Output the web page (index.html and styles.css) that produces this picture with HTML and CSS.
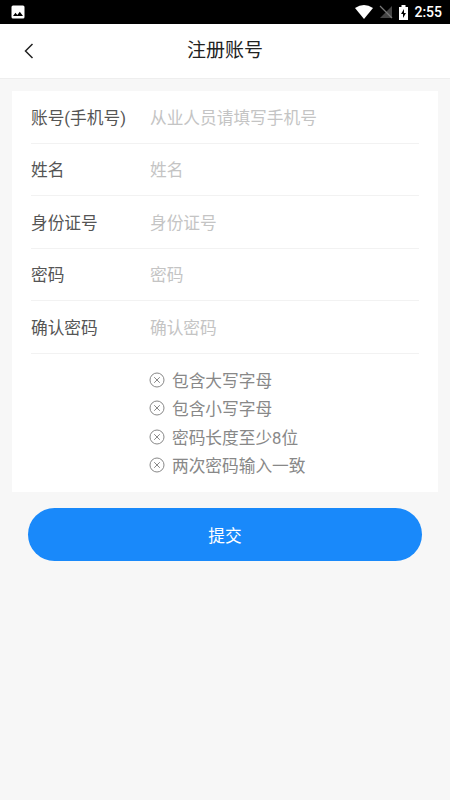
FILE: index.html
```html
<!DOCTYPE html>
<html lang="zh-CN">
<head>
<meta charset="utf-8">
<title>注册账号</title>
<link rel="stylesheet" href="styles.css">
</head>
<body>
<div class="status">
  <svg class="photo" width="14" height="14" viewBox="0 0 14 14"><rect x="0.5" y="0.5" width="13" height="13" rx="1.5" fill="#fff"/><path d="M2 11l2.5-3.2 1.8 2.1 2.5-3.2L12 11z" fill="#000"/></svg>
  <div class="tray">
    <svg width="18" height="14" viewBox="0 0 18 14"><path d="M0 3Q9-3 18 3L9 14z" fill="#fff"/></svg>
    <svg width="14" height="14" viewBox="0 0 14 14"><path d="M13 1v12H1z" fill="#444"/><path d="M1 1l12 12" stroke="#777" stroke-width="1.3"/></svg>
    <svg width="9" height="15" viewBox="0 0 9 15"><path d="M0 2h2.5V0h4v2H9v13H0z" fill="#fff"/><path d="M5 4L2 9h2v4l3-5H5z" fill="#000"/></svg>
    <span class="clock">2:55</span>
  </div>
</div>
<header class="nav">
  <svg class="back" width="10" height="16" viewBox="0 0 10 16"><path d="M8.5 1L1.5 8l7 7" fill="none" stroke="#222" stroke-width="1.5"/></svg>
  <h1>注册账号</h1>
</header>
<main>
  <form class="card">
    <div class="row"><span class="label">账号(手机号)</span><span class="hint">从业人员请填写手机号</span></div>
    <div class="row"><span class="label">姓名</span><span class="hint">姓名</span></div>
    <div class="row"><span class="label">身份证号</span><span class="hint">身份证号</span></div>
    <div class="row"><span class="label">密码</span><span class="hint">密码</span></div>
    <div class="row"><span class="label">确认密码</span><span class="hint">确认密码</span></div>
    <ul class="rules">
      <li><svg width="16" height="16" viewBox="0 0 16 16"><circle cx="8" cy="8" r="7"/><path d="M5.2 5.2l5.6 5.6M10.8 5.2l-5.6 5.6"/></svg>包含大写字母</li>
      <li><svg width="16" height="16" viewBox="0 0 16 16"><circle cx="8" cy="8" r="7"/><path d="M5.2 5.2l5.6 5.6M10.8 5.2l-5.6 5.6"/></svg>包含小写字母</li>
      <li><svg width="16" height="16" viewBox="0 0 16 16"><circle cx="8" cy="8" r="7"/><path d="M5.2 5.2l5.6 5.6M10.8 5.2l-5.6 5.6"/></svg>密码长度至少8位</li>
      <li><svg width="16" height="16" viewBox="0 0 16 16"><circle cx="8" cy="8" r="7"/><path d="M5.2 5.2l5.6 5.6M10.8 5.2l-5.6 5.6"/></svg>两次密码输入一致</li>
    </ul>
  </form>
  <button class="submit">提交</button>
</main>
</body>
</html>
```

FILE: styles.css
```css
* { box-sizing: border-box; }
body { margin: 0; min-height: 800px; background: #f7f7f7; font-family: Roboto, "Noto Sans CJK SC", sans-serif; }
.status { height: 24px; background: #000; display: flex; align-items: center; justify-content: space-between; padding: 0 8px 0 11px; }
.tray { display: flex; align-items: center; gap: 6px; }
.clock { color: #fff; font-size: 14px; font-weight: 500; line-height: 24px; }
.nav { height: 55px; background: #fff; border-bottom: 1px solid #eee; display: grid; grid-template-columns: 50px 1fr 50px; align-items: center; }
.back { margin-left: 24px; }
h1 { margin: 0; text-align: center; font-size: 19px; font-weight: 400; line-height: 28px; color: #222; }
main { padding: 12px; }
.card { background: #fff; height: 401px; padding: 0 19px; }
.row { height: 52.5px; display: flex; align-items: center; border-bottom: 1px solid #f2f2f2; font-size: 16.7px; }
.label { width: 119px; color: #555; white-space: nowrap; }
.hint { color: #c4c4c4; }
.rules { list-style: none; margin: 0; padding: 12px 0 0 118px; }
.rules li { display: flex; align-items: center; gap: 7px; height: 28.5px; font-size: 16.7px; color: #888; white-space: nowrap; }
.rules svg { fill: none; stroke: #888; stroke-width: 1; }
.submit { display: block; width: 394px; height: 53px; margin: 16px auto 0; border: 0; border-radius: 27px; background: #1989fa; color: #fff; font: inherit; font-size: 16.7px; }
```
